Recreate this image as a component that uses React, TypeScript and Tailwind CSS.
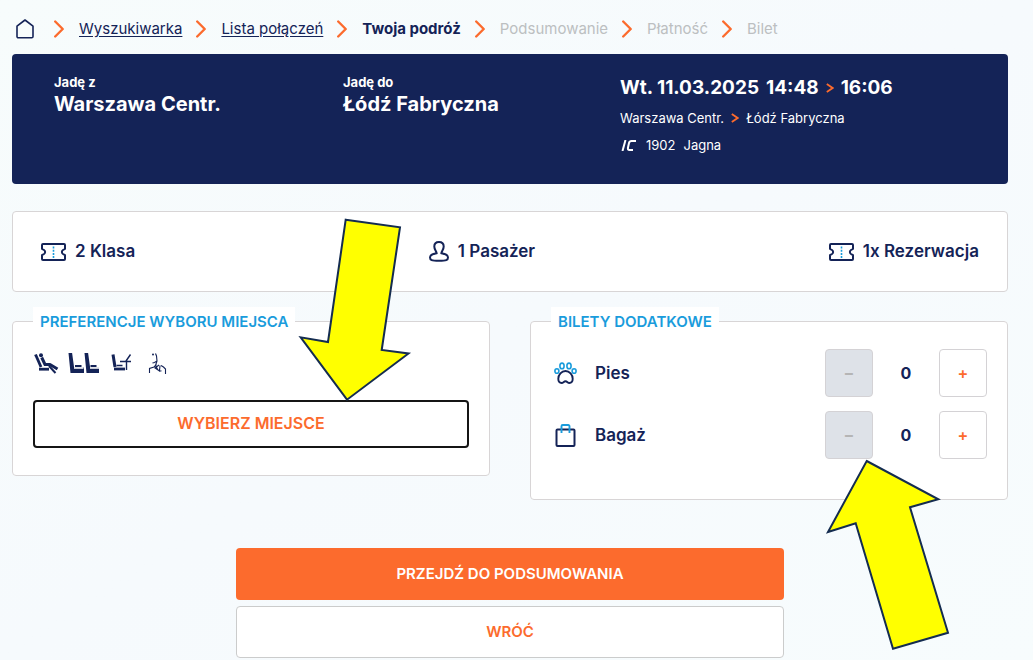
import { useState } from 'react';
import type { ReactNode } from 'react';

const STEPS = [
  { label: 'Wyszukiwarka', state: 'done' },
  { label: 'Lista połączeń', state: 'done' },
  { label: 'Twoja podróż', state: 'current' },
  { label: 'Podsumowanie', state: 'todo' },
  { label: 'Płatność', state: 'todo' },
  { label: 'Bilet', state: 'todo' },
];

function Chevron({ className }: { className: string }) {
  return (
    <svg viewBox="0 0 10 18" fill="none" stroke="#fc6b2d" strokeWidth="2.4" strokeLinecap="round" strokeLinejoin="round" className={className}>
      <path d="M1.2 1.5 8.7 9l-7.5 7.5" />
    </svg>
  );
}

function SmallChevron() {
  return (
    <svg viewBox="0 0 8 10" fill="none" stroke="#fc6b2d" strokeWidth="1.8" className="w-2 h-2.5 shrink-0">
      <path d="M.8 1 6.6 5 .8 9" />
    </svg>
  );
}

function HomeIcon() {
  return (
    <svg viewBox="0 0 18 20" fill="none" stroke="#142357" strokeWidth="1.6" strokeLinejoin="round" className="w-[18px] h-5">
      <path d="M1 7.2 9 1l8 6.2v10.300a1.300 1.300 0 0 1-1.300 1.300H2.300A1.300 1.300 0 0 1 1 17.500Z" />
    </svg>
  );
}

function TicketIcon() {
  return (
    <svg viewBox="0 0 25 18" fill="none" className="w-[25px] h-[18px]">
      <path
        d="M2 1h21a1 1 0 0 1 1 1v3.800l-2 1.200c-1.500 1-1.500 3 0 4l2 1.200V16a1 1 0 0 1-1 1H2a1 1 0 0 1-1-1v-3.800L3 11c1.500-1 1.500-3 0-4L1 5.800V2a1 1 0 0 1 1-1Z"
        stroke="#142357"
        strokeWidth="2"
        strokeLinejoin="round"
      />
      <path d="M12.500 3.500V15" stroke="#1a9cdc" strokeWidth="1.600" strokeDasharray="2 1.200" />
    </svg>
  );
}

function PassengerIcon() {
  return (
    <svg viewBox="0 0 20 21" fill="none" stroke="#142357" strokeWidth="2" strokeLinejoin="round" className="w-5 h-[21px]">
      <path d="M7.700 12.300C7.300 9.700 5.300 8.500 5.300 5.500 5.300 2.800 7.200 1 10 1s4.700 1.800 4.700 4.500c0 3-2 4.200-2.400 6.800 2.500.6 6.700.9 6.700 4.200 0 2.600-1.400 3.300-9 3.300s-9-.7-9-3.300c0-3.300 4.200-3.600 6.700-4.200Z" />
    </svg>
  );
}

function PawIcon() {
  return (
    <svg viewBox="0 0 23 22" fill="none" strokeWidth="1.600" className="w-[23px] h-[22px]">
      <g stroke="#1a9cdc">
        <ellipse cx="2.900" cy="9" rx="2" ry="2.300" />
        <ellipse cx="8" cy="3.900" rx="2.100" ry="2.800" />
        <ellipse cx="15" cy="3.900" rx="2.100" ry="2.800" />
        <ellipse cx="20.100" cy="9" rx="2" ry="2.300" />
      </g>
      <path d="M11.500 9c-4 0-7.200 3.800-7.200 7.800 0 2.600 1.500 4.200 3.400 4.200 1.500 0 2.100-1.800 3.800-1.800s2.300 1.800 3.800 1.800c1.900 0 3.400-1.600 3.400-4.200 0-4-3.200-7.800-7.200-7.800Z" stroke="#142357" strokeWidth="1.900" />
    </svg>
  );
}

function BagIcon() {
  return (
    <svg viewBox="0 0 23 23" fill="none" className="w-[23px] h-[23px]">
      <rect x="2.500" y="5.500" width="18" height="16.500" rx="1" stroke="#142357" strokeWidth="2" />
      <path d="M7.500 9V2.200A1.200 1.200 0 0 1 8.700 1h5.600a1.200 1.200 0 0 1 1.200 1.200V9" stroke="#1a9cdc" strokeWidth="1.900" />
    </svg>
  );
}

function SeatIcons() {
  return (
    <svg viewBox="0 0 134 24" fill="none" stroke="#142357" className="ml-px h-6 w-[134px]">
      {/* reclining passenger */}
      <path d="M1.500 2.500 7 15" strokeWidth="2.800" />
      <path d="M5 17.200h10" strokeWidth="2.800" />
      <circle cx="7" cy="3.200" r="2" fill="#142357" stroke="none" />
      <path d="M7.700 5.500 11 12.500h5l7.500 4.500" strokeWidth="3" strokeLinejoin="round" />
      <path d="m15 14 6.500 7" strokeWidth="2" />
      {/* pair of seats */}
      <g fill="#142357" stroke="none">
        <path d="M34.500 1h3.600l2 14.500H50V21H36.500Z" />
        <path d="M50.500 1h3.600l2 14.500H65V21H52.500Z" />
      </g>
      <path d="M40 16h9.500M56 16h9" stroke="#fff" strokeWidth="1.500" />
      <path d="M41 14h6.500M56.500 14h6" strokeWidth="2" />
      {/* seat with a table */}
      <path d="M79 2.500 81 15" strokeWidth="3" />
      <path d="M80 17h11" strokeWidth="2.800" />
      <path d="M86 9.500h11M92.500 9v9M92 9l4.500-6.500" strokeWidth="1.400" />
      <path d="M82.500 13.500h6" strokeWidth="1.500" />
      {/* passenger at a window */}
      <path d="M115.500 21v-4.500l4.500-1.500 2.500-2.500M121.500 1.500l1 2.500.5 5-2.500 1.500-2 .5M123 9l-1.500 4.500 2.500 4.500 3.500 1M125 13l-4 3 4.500 3 .5-5.500M127 13.500l2.500 1.500 2 2v5" strokeWidth="1.100" />
      <circle cx="119" cy="2.500" r="1" fill="#142357" stroke="none" />
    </svg>
  );
}

function Panel({ title, children }: { title: string; children: ReactNode }) {
  return (
    <fieldset className="min-w-0 flex-1 rounded border border-[#d8d5d6] bg-white px-5">
      <legend className="bg-white px-[7px] text-[15px] leading-[29px] font-semibold text-[#1a9cdc]">{title}</legend>
      {children}
    </fieldset>
  );
}

function Counter({ label, icon }: { label: string; icon: ReactNode }) {
  const [count, setCount] = useState(0);

  return (
    <div className="flex items-center">
      <span className="flex w-7 justify-center">{icon}</span>
      <span className="ml-4 flex-1 text-[17px] leading-6 font-semibold">{label}</span>
      <button
        aria-label={`Usuń: ${label}`}
        disabled={count === 0}
        onClick={() => setCount(count - 1)}
        className="size-12 rounded border border-[#d4d2d5] bg-[#dee2e8] font-bold text-[#b5b5b5]"
      >
        −
      </button>
      <span className="w-[66px] text-center text-base font-bold">{count}</span>
      <button
        aria-label={`Dodaj: ${label}`}
        onClick={() => setCount(count + 1)}
        className="size-12 rounded border border-[#d4d2d5] bg-white font-semibold text-[#fc6b2d]"
      >
        +
      </button>
    </div>
  );
}

function Arrow({ points }: { points: string }) {
  return <polygon points={points} fill="#ffff00" stroke="#142c50" strokeWidth="2" />;
}

export default function App() {
  return (
    <div className="relative min-h-screen bg-linear-to-br from-[#f7fcfc] via-[#f6fafd] to-[#f7fcfd] pt-4 pr-[25px] pl-3 font-['Inter',sans-serif] text-[#142357]">
      <nav className="flex h-[26px] items-center pl-1 text-[15px]">
        <a href="#home" aria-label="Strona główna" className="mr-1.5">
          <HomeIcon />
        </a>
        {STEPS.map((step) => (
          <span key={step.label} className="flex items-center">
            <Chevron className="mr-[15px] ml-3.5 h-[18px] w-2.5" />
            {step.state === 'done' && (
              <a href="#krok" className="underline underline-offset-2">{step.label}</a>
            )}
            {step.state === 'current' && <strong className="font-bold">{step.label}</strong>}
            {step.state === 'todo' && <span className="text-[#bcbfc1]">{step.label}</span>}
          </span>
        ))}
      </nav>

      <header className="mt-3 grid h-[130px] grid-cols-[289fr_277fr_388fr] rounded bg-[#142357] pt-5 pl-[42px] text-white">
        <div>
          <p className="text-[13px] leading-4 font-bold">Jadę z</p>
          <p className="text-xl leading-7 font-bold">Warszawa Centr.</p>
        </div>
        <div>
          <p className="text-[13px] leading-4 font-bold">Jadę do</p>
          <p className="text-xl leading-7 font-bold">Łódź Fabryczna</p>
        </div>
        <div>
          <p className="flex items-center gap-[7px] text-[19px] leading-7 font-bold">
            <span>Wt. 11.03.2025</span>
            <span>14:48</span>
            <SmallChevron />
            <span>16:06</span>
          </p>
          <p className="mt-1.5 flex items-center gap-[7px] text-[13px] leading-5">
            <span>Warszawa Centr.</span>
            <SmallChevron />
            <span>Łódź Fabryczna</span>
          </p>
          <p className="mt-[7px] flex items-center text-[13px] leading-5">
            <svg viewBox="0 0 16 11" fill="none" stroke="white" strokeWidth="2" className="mr-2.5 h-[11px] w-4">
              <path d="M5.500 0 2.500 11M16 1h-4.500Q9.500 1 9 3L8 7.500Q7.500 10 9.500 10H13" />
            </svg>
            <span className="mr-2">1902</span>
            <span>Jagna</span>
          </p>
        </div>
      </header>

      <section className="mt-[27px] flex h-[81px] items-center justify-between rounded border border-[#d8d5d6] bg-white px-7 text-[17px] font-semibold">
        <span className="flex items-center gap-[9px]">
          <TicketIcon />2 Klasa
        </span>
        <span className="flex items-center gap-[9px]">
          <PassengerIcon />1 Pasażer
        </span>
        <span className="flex items-center gap-[9px]">
          <TicketIcon />1x Rezerwacja
        </span>
      </section>

      <div className="mt-[15px] flex items-start gap-10">
        <Panel title="PREFERENCJE WYBORU MIEJSCA">
          <div className="mt-4">
            <SeatIcons />
          </div>
          <button className="mt-6 mb-[27px] h-12 w-full rounded border-2 border-[#151515] bg-white pb-0.5 text-base font-semibold text-[#fc6b2d]">
            WYBIERZ MIEJSCE
          </button>
        </Panel>
        <Panel title="BILETY DODATKOWE">
          <div className="mt-[13px] mb-10 flex flex-col gap-3.5">
            <Counter label="Pies" icon={<PawIcon />} />
            <Counter label="Bagaż" icon={<BagIcon />} />
          </div>
        </Panel>
      </div>

      <div className="mx-auto mt-12 flex w-[55%] flex-col gap-1.5 text-[15px] font-semibold">
        <button className="h-13 rounded bg-[#fc6b2d] text-white">PRZEJDŹ DO PODSUMOWANIA</button>
        <button className="h-13 rounded border border-[#cbcccc] bg-white text-[#fc6b2d]">WRÓĆ</button>
      </div>

      <svg viewBox="300 218 110 184" className="pointer-events-none absolute top-[218px] left-[300px] h-[184px] w-[110px] overflow-visible">
        <Arrow points="345.700,219.700 400,227.300 381.700,350 408.500,353.500 347,399.700 300.700,337.300 328,342" />
      </svg>
      <svg viewBox="826 458 124 194" className="pointer-events-none absolute top-[458px] left-[826px] h-[194px] w-[124px] overflow-visible">
        <Arrow points="866.700,461 938.300,499.300 910,507.300 948,632.700 893,648.700 855.700,523.300 828,532" />
      </svg>
    </div>
  );
}
